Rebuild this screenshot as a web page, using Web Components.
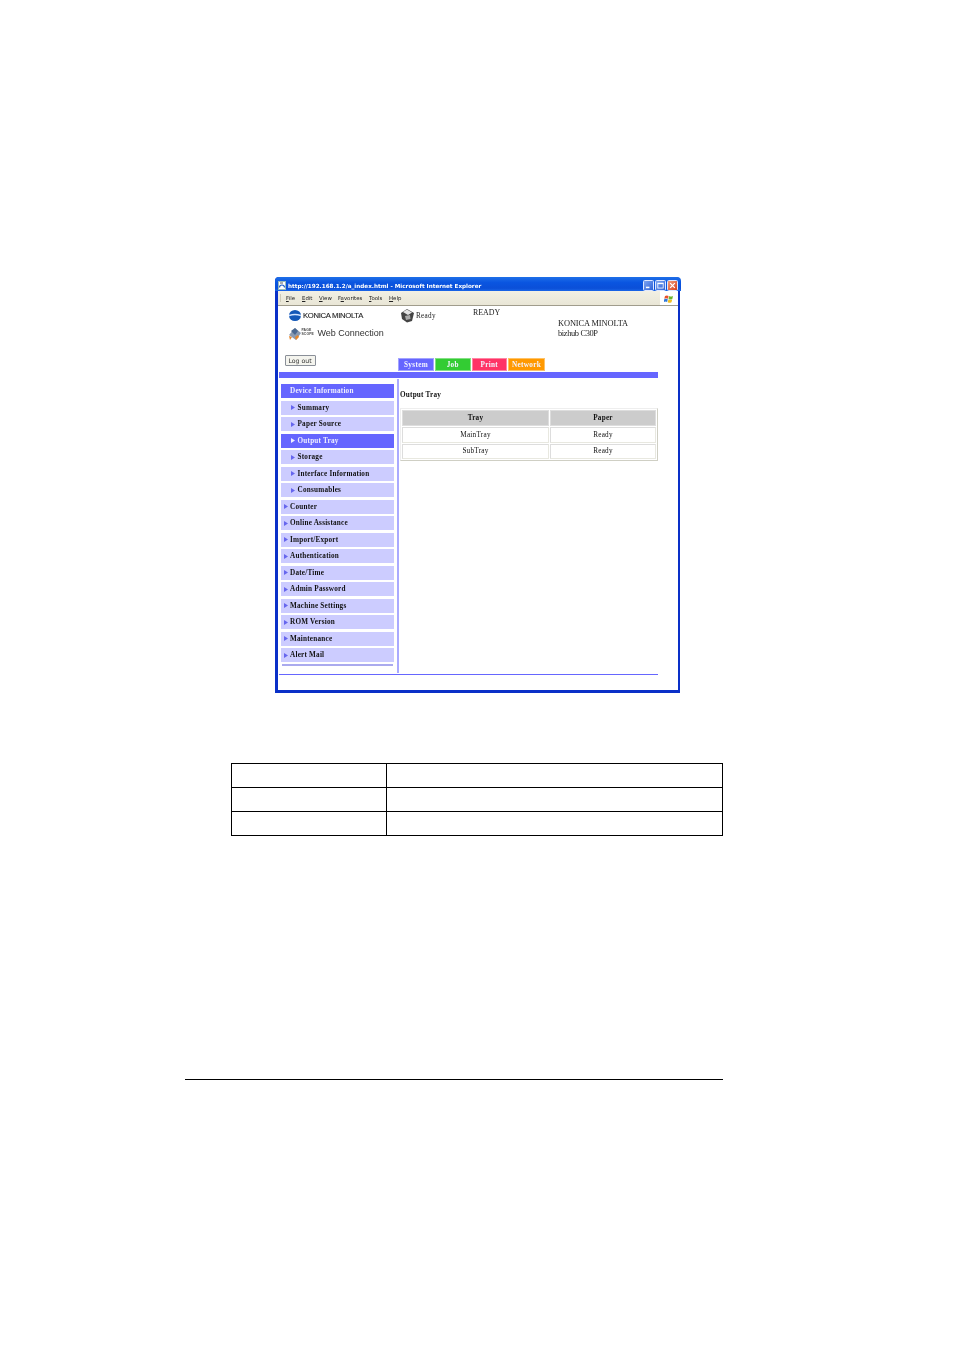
<!DOCTYPE html>
<html lang="en"><head><meta charset="utf-8"><title>Output Tray</title>
<style>
html,body{margin:0;padding:0;background:#fff;font-family:"Liberation Serif",serif;}
</style></head>
<body>
<doc-page>
  <ie-window>
    <ie-titlebar slot="title">http://192.168.1.2/a_index.html - Microsoft Internet Explorer</ie-titlebar>
    <ie-menubar slot="menu"></ie-menubar>
    <pw-header></pw-header>
    <pw-tabs></pw-tabs>
    <pw-body>
      <pw-nav slot="nav">
        <pw-item state="head">Device Information</pw-item>
        <pw-item sub>Summary</pw-item>
        <pw-item sub>Paper Source</pw-item>
        <pw-item sub state="on">Output Tray</pw-item>
        <pw-item sub>Storage</pw-item>
        <pw-item sub>Interface Information</pw-item>
        <pw-item sub>Consumables</pw-item>
        <pw-item>Counter</pw-item>
        <pw-item>Online Assistance</pw-item>
        <pw-item>Import/Export</pw-item>
        <pw-item>Authentication</pw-item>
        <pw-item>Date/Time</pw-item>
        <pw-item>Admin Password</pw-item>
        <pw-item>Machine Settings</pw-item>
        <pw-item>ROM Version</pw-item>
        <pw-item>Maintenance</pw-item>
        <pw-item>Alert Mail</pw-item>
      </pw-nav>
      <pw-output></pw-output>
    </pw-body>
  </ie-window>
  <blank-table></blank-table>
  <page-rule></page-rule>
</doc-page>
<script>
function def(name, html, init){
  customElements.define(name, class extends HTMLElement{
    constructor(){super();this.attachShadow({mode:'open'}).innerHTML=html;}
    connectedCallback(){if(init)init(this);}
  });
}
def('doc-page',`<style>:host{display:block;width:954px;height:1350px;padding-top:277px;box-sizing:border-box;overflow:hidden}</style><slot></slot>`);

def('ie-window',`<style>
:host{display:block;width:405px;height:416px;margin-left:275px;box-sizing:border-box;background:#0a30c8;border-radius:4px 4px 0 0;padding:0 2px 3px 3px;filter:blur(.25px)}
.in{display:flex;flex-direction:column;background:#fff}
.main{flex:1;padding-left:1px;width:379px;display:flex;flex-direction:column}
.top{margin:0 -3px -0px;}
</style><div class="top"><slot name="title"></slot></div><slot name="menu"></slot><div class="in" style="height:384px"><div class="main"><slot></slot></div></div>`);

def('ie-titlebar',`<style>
:host{display:flex;align-items:center;height:14px;box-sizing:border-box;padding:2px 3px 0 3px;border-radius:4px 4px 0 0;background:linear-gradient(#1f6fe8,#0a55e0 40%,#0b4fd8 80%,#1a66e8);color:#fff;font:bold 5.65px "DejaVu Sans",sans-serif}
svg{flex:none;margin-right:2px}
.t{flex:1;white-space:nowrap;padding-top:1px}
.b{width:11px;height:11px;margin-left:1px;border:.5px solid #dfe8ff;border-radius:1.5px;box-sizing:border-box;background:linear-gradient(135deg,#7da4f0,#2f62d8);display:flex;align-items:center;justify-content:center}
.x{background:linear-gradient(135deg,#f0a080,#d8401c)}
</style>
<svg width="8" height="9" viewBox="0 0 8 9"><rect x=".5" y=".5" width="7" height="8" fill="#fff" stroke="#9bb"/><path d="M1.5 6.5a2.5 2.5 0 1 1 5 0" fill="none" stroke="#1c5fc8" stroke-width="1.2"/><path d="M2 2h3" stroke="#333" stroke-width=".8"/></svg>
<span class="t"><slot></slot></span>
<span class="b"><svg width="7" height="7" viewBox="0 0 6 6" style="margin:0"><rect x=".8" y="4" width="3" height="1.3" fill="#fff"/></svg></span>
<span class="b"><svg width="7" height="7" viewBox="0 0 6 6" style="margin:0"><rect x=".7" y="1" width="4.6" height="4.2" fill="none" stroke="#fff" stroke-width=".7"/><rect x=".7" y=".8" width="4.6" height="1" fill="#fff"/></svg></span>
<span class="b x"><svg width="7" height="7" viewBox="0 0 6 6" style="margin:0"><path d="M1 1l4 4M5 1l-4 4" stroke="#fff" stroke-width="1.1"/></svg></span>`);

def('ie-menubar',`<style>
:host{display:flex;align-items:center;height:15px;box-sizing:border-box;background:linear-gradient(#f2f0e4,#e9e6d6);border-bottom:1px solid #a09c8c;font:5.4px "DejaVu Sans",sans-serif;color:#222}
.g{width:1px;height:8px;margin-left:2px;border-left:1px solid #cfcbb8}
span{white-space:nowrap}
span u{text-decoration:underline}
.f{margin-left:auto;width:18px;height:14px;background:#fff;display:flex;align-items:center;justify-content:center}
</style>
<i class="g"></i>
<span style="margin-left:4px;width:16px"><u>F</u>ile</span>
<span style="width:17px"><u>E</u>dit</span>
<span style="width:19px"><u>V</u>iew</span>
<span style="width:31px">F<u>a</u>vorites</span>
<span style="width:20px"><u>T</u>ools</span>
<span><u>H</u>elp</span>
<span class="f"><svg width="10" height="9" viewBox="0 0 10 9"><path d="M1 2q2-1 3.6 0l-.7 2.8q-1.6-1-3.6 0z" fill="#e8502a"/><path d="M5.2 2.1q1.6 1 3.8 0l-.7 2.8q-2 1-3.8 0z" fill="#6cb52d"/><path d="M.2 5.3q2-1 3.6 0l-.7 2.8q-1.6-1-3.6 0z" fill="#2f78d8"/><path d="M4.4 5.4q1.6 1 3.8 0l-.7 2.8q-2 1-3.8 0z" fill="#f2c020"/></svg></span>`);

def('pw-header',`<style>
:host{display:flex;height:52px;box-sizing:border-box;font:7.2px "Liberation Serif",serif;color:#222;flex:none}
.l{width:119px;flex:none;padding-left:9.5px;box-sizing:border-box}
.k{display:flex;align-items:center;height:12px;margin-top:3px;font:7.7px "Liberation Sans",sans-serif;-webkit-text-stroke:.12px #222;letter-spacing:-.3px;color:#222;gap:2.5px;white-space:nowrap}
.w{display:flex;align-items:center;height:14px;margin-top:5px;font:9px "Liberation Sans",sans-serif;color:#333;white-space:nowrap}
.ps{font:bold 3.4px/3.6px "Liberation Sans",sans-serif;margin:0 3.5px 0 1px;letter-spacing:.1px;color:#444}
button{display:block;margin:15px 0 0 -4px;width:31px;height:11px;padding:0;background:#f4f4ee;border:1px solid #8a8f98;font:6.2px "DejaVu Sans",sans-serif;color:#333;border-radius:1px;line-height:8px}
.r{flex:1;display:flex;align-items:flex-start;white-space:nowrap}
.p{display:flex;align-items:center;width:75px;margin-top:2px;padding-left:2px;box-sizing:border-box;letter-spacing:.3px}
.p svg{margin-right:1px}
.rd{width:85px;margin-top:2px;letter-spacing:0;font-size:7.9px;line-height:9px}
.m{margin-top:13px;font-size:8.4px;line-height:9.5px;letter-spacing:-.1px}
.m span{letter-spacing:-.35px}
</style>
<div class="l">
  <div class="k"><svg width="12" height="11" viewBox="0 0 12 11"><ellipse cx="6" cy="5.5" rx="6" ry="5.5" fill="#1257b8"/><path d="M0 5.5q6-2 12 0" stroke="#cfe2ff" stroke-width="1.4" fill="none"/></svg>KONICA MINOLTA</div>
  <div class="w"><svg width="12" height="13" viewBox="0 0 12 13"><path d="M0 8l6-7 6 5-5 7z" fill="#8a9ab0"/><path d="M2 4l4-3 3 3-3 4z" fill="#4a6890"/><path d="M0 9l3 1-2 3zM6 10l3-2 1 2-3 3z" fill="#e8862a"/></svg><span class="ps">PAGE<br>SCOPE</span>Web Connection</div>
  <button>Log out</button>
</div>
<div class="r">
  <div class="p"><svg width="15" height="15" viewBox="0 0 15 15"><path d="M1 5l6-4 7 4-2 8-5 1.5L2 11z" fill="#444"/><path d="M3 4l4-2.5 5 3-4 2.5z" fill="#e4e4e4"/><path d="M5 8l5-1 .5 4-4.5 1z" fill="#aaa"/></svg>Ready</div>
  <div class="rd">READY</div>
  <div class="m">KONICA MINOLTA<br><span>bizhub C30P</span></div>
</div>`);

def('pw-tabs',`<style>
:host{display:flex;height:14px;flex:none;padding-left:119px;gap:1px;font:bold 7.2px "Liberation Serif",serif;color:#f4f4ff;letter-spacing:.35px}
span{display:flex;align-items:center;justify-content:center;height:13px;box-sizing:border-box;border:.5px solid rgba(255,255,255,.4)}
</style>
<span style="width:36px;background:#6666ff">System</span>
<span style="width:35.5px;background:#33cc33">Job</span>
<span style="width:35.5px;background:#ff3366">Print</span>
<span style="width:37px;background:#ff9900">Network</span>`);

def('pw-body',`<style>
:host{display:flex;flex-direction:column;flex:1;min-height:0}
.bar{height:6px;background:#6666ff;flex:none}
.c{display:flex;height:295px;flex:none}
.n{width:118px;flex:none;padding:6px 0 0 2px;box-sizing:border-box}
.d{width:2px;background:#aaaaff;flex:none;margin-top:1px}
.o{flex:1;min-width:0}
.foot{height:1px;background:#6666ff;flex:none;margin-top:1px}
</style>
<div class="bar"></div>
<div class="c"><div class="n"><slot name="nav"></slot></div><div class="d"></div><div class="o"><slot></slot></div></div>
<div class="foot"></div>`);

def('pw-nav',`<style>
:host{display:flex;flex-direction:column;gap:2.5px;width:113px}
.end{height:2px;margin:-.5px 1px 0;background:#aaaaee}
</style><slot></slot><div class="end"></div>`);

customElements.define('pw-item', class extends HTMLElement{
  constructor(){super();this.attachShadow({mode:'open'}).innerHTML=`<style>
  :host{display:flex;align-items:center;height:14px;box-sizing:border-box;padding-left:2.5px;background:#ccccff;color:#111;font:bold 7.2px "Liberation Serif",serif;letter-spacing:.22px;white-space:nowrap}
  :host([sub]){padding-left:10px}
  :host([state=on]),:host([state=head]){background:#6666ff;color:#eef}
  :host([state=head]){padding-left:9px}
  :host([state=on]) svg path{fill:#eef}
  :host([state=head]) svg{display:none}
  svg{margin-right:2.5px;flex:none}
  </style><svg width="4" height="5" viewBox="0 0 4 5"><path d="M0 0l4 2.5L0 5z" fill="#6666ee"/></svg><slot></slot>`;}
});

def('pw-output',`<style>
:host{display:block;padding:12.5px 0 0 1px;font:7.2px "Liberation Serif",serif;color:#111;letter-spacing:.25px}
h1{margin:0 0 9.5px;font:bold 7.2px/8px "Liberation Serif",serif;letter-spacing:.22px}
table{width:258px;border-collapse:separate;border-spacing:1px;border:1px solid;border-color:#eee #cfcfc4 #cfcfc4 #eee;table-layout:fixed}
th,td{height:16px;padding:0;text-align:center;box-sizing:border-box;border:1px solid;border-color:#ddd #e8e8e0 #e8e8e0 #ddd;font-weight:normal}
th{background:#cccccc;font-weight:bold;border-color:#ddd}
tr+tr td{height:15.5px}
</style>
<h1>Output Tray</h1>
<table><colgroup><col style="width:147px"><col></colgroup>
<tr><th>Tray</th><th>Paper</th></tr>
<tr><td>MainTray</td><td>Ready</td></tr>
<tr><td>SubTray</td><td>Ready</td></tr></table>`);

def('blank-table',`<style>
:host{display:block;margin:70px 0 0 231px;width:492px}
.g{display:grid;grid-template-columns:155px 1fr;grid-auto-rows:24px;border-top:1px solid #000;border-left:1px solid #000;box-sizing:border-box}
.g div{border-right:1px solid #000;border-bottom:1px solid #000}
</style><div class="g"><div></div><div></div><div></div><div></div><div></div><div></div></div>`);

def('page-rule',`<style>:host{display:block;margin:243px 0 0 185px;width:538px;height:1px;background:#000}</style>`);
</script>
</body></html>
